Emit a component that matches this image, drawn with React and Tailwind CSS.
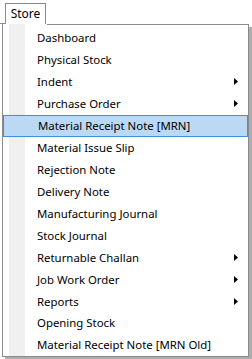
const items = [
  { label: 'Dashboard' },
  { label: 'Physical Stock' },
  { label: 'Indent', sub: true },
  { label: 'Purchase Order', sub: true },
  { label: 'Material Receipt Note [MRN]', active: true },
  { label: 'Material Issue Slip' },
  { label: 'Rejection Note' },
  { label: 'Delivery Note' },
  { label: 'Manufacturing Journal' },
  { label: 'Stock Journal' },
  { label: 'Returnable Challan', sub: true },
  { label: 'Job Work Order', sub: true },
  { label: 'Reports', sub: true },
  { label: 'Opening Stock' },
  { label: 'Material Receipt Note [MRN Old]' },
]

const Arrow = () => (
  <svg width="4" height="7" viewBox="0 0 4 7" className="block">
    <polygon points="0,0 4,3.5 0,7" fill="#000" />
  </svg>
)

const App = () => {
  return (
    <div className="w-[252px] h-[359px] bg-white overflow-hidden font-['Noto_Sans',sans-serif] text-[11.4px] text-black">
      <div className="h-[24px] flex items-end">
        <div className="w-[5px] h-px bg-[#8a8a8a]"></div>
        <div className="w-[41px] h-[21px] border border-b-0 border-[#8a8a8a] bg-white flex items-center justify-center leading-none text-[12px]">
          Store
        </div>
      </div>
      <div className="relative ml-[2px] w-[247px] h-[333px]">
        <div className="absolute left-[3px] top-[3px] w-[247px] h-[333px] bg-[#8c8c8c] opacity-70"></div>
        <div className="relative h-full border border-[#8a8a8a] border-t-0 bg-white flex">
          <div className="absolute top-0 left-[44px] right-[-1px] h-px bg-[#8a8a8a]"></div>
          <div className="absolute top-0 left-[6px] w-[17px] bottom-0 bg-[#f0f0f0] border-r border-white"></div>
          <div className="relative flex-1 flex flex-col pt-[3px]">
            {items.map((it) => (
              <div
                key={it.label}
                className={`h-[22px] flex items-center pl-[34px] pr-[10px] ${it.active ? 'bg-[#bbd9f4] border border-[#3b8fdb] pl-[33px] pr-[9px]' : ''}`}
              >
                <span className="flex-1 whitespace-nowrap leading-none">{it.label}</span>
                {it.sub && <Arrow />}
              </div>
            ))}
          </div>
        </div>
      </div>
    </div>
  )
}

export default App
